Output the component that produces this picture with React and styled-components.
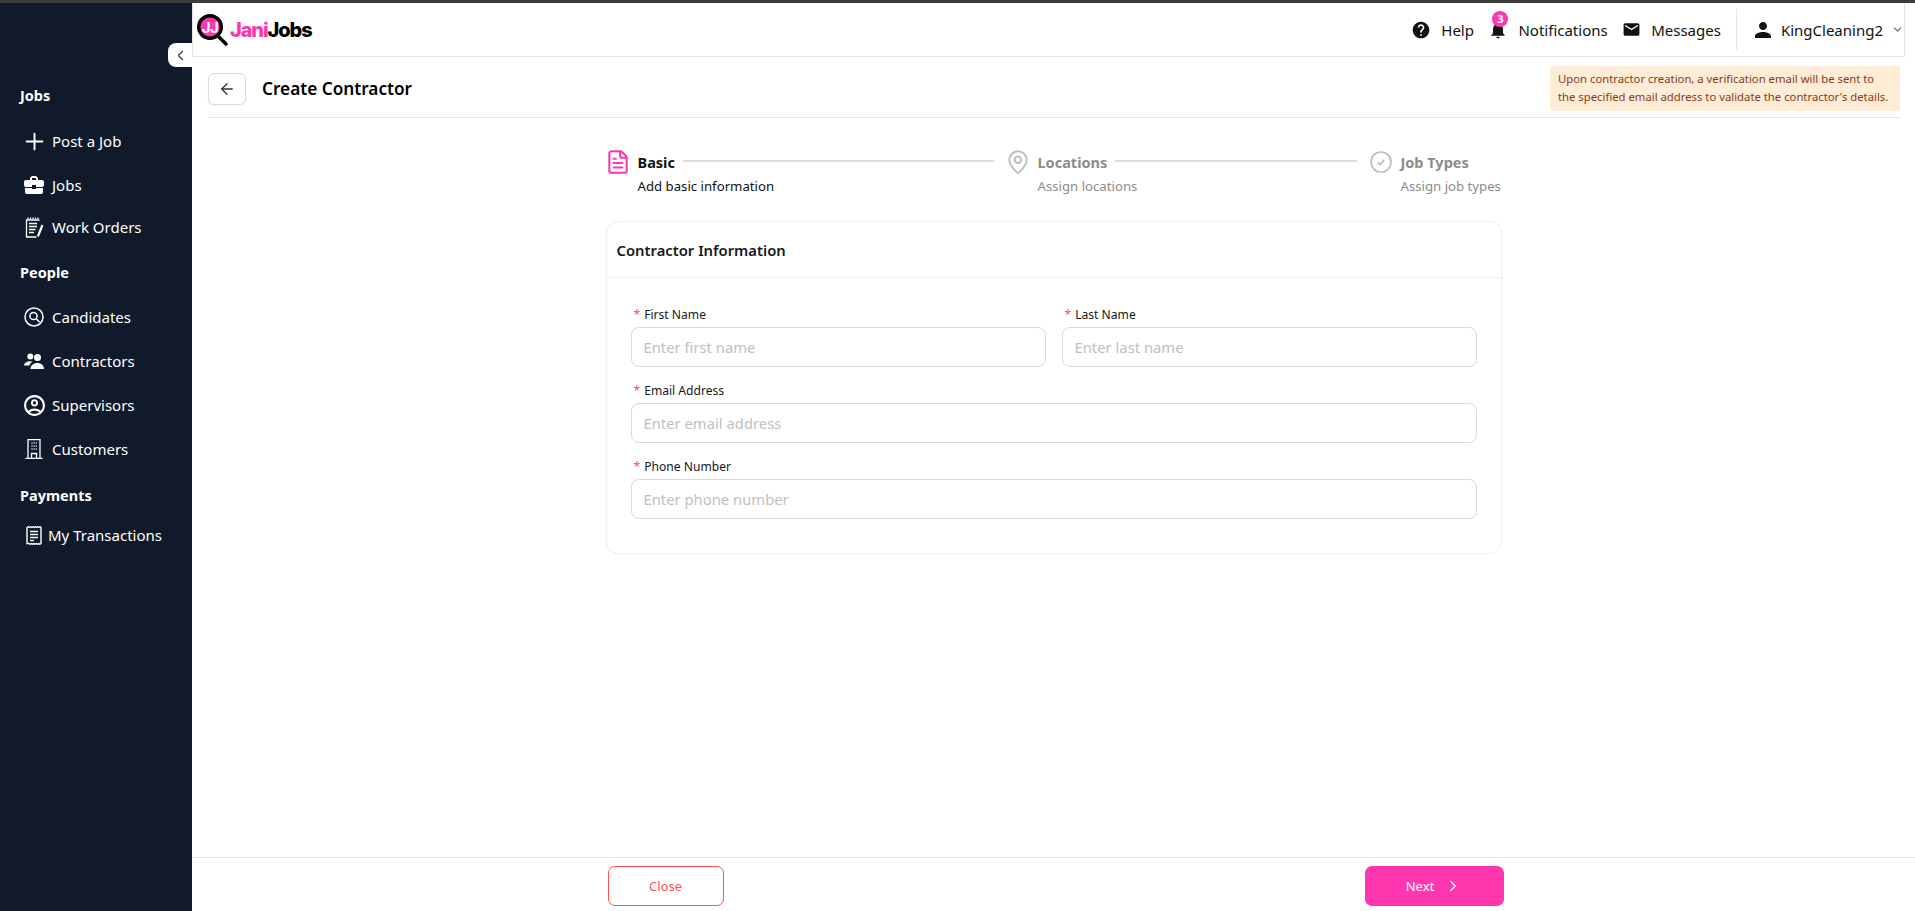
import React from 'react';
import styled, { createGlobalStyle } from 'styled-components';
import { Plus, ArrowLeft, ChevronLeft, ChevronDown, ChevronRight, FileText, MapPin } from 'lucide-react';
import {
  MdBusinessCenter,
  MdOutlineAccountCircle,
  MdHelp,
  MdNotifications,
  MdEmail,
  MdPerson,
} from 'react-icons/md';

const GlobalStyle = createGlobalStyle`
  html, body { margin: 0; padding: 0; height: 100%; background: #fff; }
  body { font-family: "Noto Sans", "Open Sans", sans-serif; color: #111; overflow: hidden; }
  #root { height: 100%; }
  * { box-sizing: border-box; }
  svg { flex-shrink: 0; }
`;

const Shell = styled.div`
  display: flex;
  height: 100vh;
  border-top: 3px solid #3b3b3b;
`;

const Sidebar = styled.aside`
  position: relative;
  width: 192px;
  flex-shrink: 0;
  background: #111a2a;
  color: #fff;
  padding-top: 81px;
`;

const CollapseButton = styled.button`
  position: absolute;
  top: 40px;
  right: 0;
  width: 24px;
  height: 24px;
  padding: 0;
  border: none;
  border-radius: 8px 0 0 8px;
  background: #fff;
  color: #333;
  display: flex;
  align-items: center;
  justify-content: center;
`;

const NavHeading = styled.div`
  height: 22px;
  line-height: 22px;
  padding-left: 20px;
  font-size: 14.5px;
  font-weight: 700;
  margin-top: ${(p) => p.$top || 0}px;
`;

const NavItem = styled.a`
  display: flex;
  align-items: center;
  height: 24px;
  padding-left: 24px;
  gap: ${(p) => (p.$tight ? 5 : 8)}px;
  font-size: 15px;
  color: #fff;
  margin-top: ${(p) => p.$top || 20}px;
`;

const NavIcon = styled.span`
  width: ${(p) => (p.$tight ? 19 : 20)}px;
  height: 24px;
  display: flex;
  align-items: center;
  justify-content: center;
  flex-shrink: 0;
`;

const Main = styled.div`
  flex: 1;
  min-width: 0;
  display: flex;
  flex-direction: column;
`;

const Header = styled.header`
  height: 54px;
  flex-shrink: 0;
  margin-right: 10px;
  padding: 0 0 0 3px;
  display: flex;
  align-items: center;
  justify-content: space-between;
  border: solid #e6e6e6;
  border-width: 0 1px 1px 1px;
`;

const Logo = styled.div`
  display: flex;
  align-items: center;
  height: 100%;
`;

const LogoWord = styled.span`
  font-family: "Inter", sans-serif;
  font-size: 20px;
  font-weight: 800;
  letter-spacing: -1.1px;
  line-height: 1;
  margin-top: 1px;
  color: ${(p) => p.$color};
`;

const HeaderNav = styled.nav`
  display: flex;
  align-items: center;
  height: 100%;
`;

const HeaderLink = styled.a`
  position: relative;
  display: flex;
  align-items: center;
  gap: ${(p) => p.$gap || 10}px;
  margin-left: 14.5px;
  font-size: 15px;
  color: #111;
`;

const Badge = styled.span`
  position: absolute;
  top: -9px;
  left: 4px;
  width: 16px;
  height: 16px;
  border-radius: 50%;
  background: #fe37ae;
  color: #fff;
  font-size: 11px;
  font-weight: 700;
  line-height: 16px;
  text-align: center;
`;

const HeaderDivider = styled.span`
  width: 1px;
  height: 41px;
  background: #e6e6e6;
  margin-left: 15px;
`;

const UserMenu = styled(HeaderLink)`
  margin-left: 14px;
`;

const UserChevron = styled(ChevronDown)`
  margin-left: 2px;
  color: #666;
`;

const TitleBar = styled.div`
  flex-shrink: 0;
  margin: 0 15px 0 16px;
  padding: 9px 0 6px;
  display: flex;
  align-items: center;
  justify-content: space-between;
  border-bottom: 1px solid #e6e6e6;
`;

const TitleGroup = styled.div`
  display: flex;
  align-items: center;
  gap: 16px;
`;

const BackButton = styled.button`
  width: 38px;
  height: 32px;
  padding: 0;
  display: flex;
  align-items: center;
  justify-content: center;
  background: #fff;
  border: 1px solid #dcdcdc;
  border-radius: 6px;
  box-shadow: 0 1px 2px rgba(0, 0, 0, 0.05);
  color: #333;
`;

const PageTitle = styled.h1`
  margin: 0;
  font-size: 17.2px;
  font-weight: 600;
  color: #000;
`;

const Notice = styled.div`
  width: 350px;
  height: 45px;
  padding: 4px 8px;
  background: #feecd6;
  border-radius: 4px;
  font-size: 11.3px;
  line-height: 18px;
  white-space: nowrap;
  color: #8a3a1a;
`;

const Content = styled.main`
  flex: 1;
  min-height: 0;
  display: flex;
  flex-direction: column;
  align-items: center;
`;

const Column = styled.div`
  width: 896px;
`;

const Stepper = styled.div`
  display: flex;
  margin-top: 33px;
  height: 70px;
`;

const Step = styled.div`
  display: flex;
  gap: 8px;
  flex-shrink: 0;
  width: ${(p) => (p.$width ? `${p.$width}px` : 'auto')};
  padding-right: 12px;
  color: ${(p) => (p.$active ? '#111' : '#8c8c8c')};
`;

const StepIcon = styled.span`
  width: 24px;
  height: 22px;
  display: flex;
  align-items: center;
  justify-content: center;
  flex-shrink: 0;
  color: ${(p) => (p.$active ? '#fe37ae' : '#bdbdbd')};
`;

const StepBody = styled.div`
  flex: 1;
  min-width: 0;
`;

const StepHead = styled.div`
  display: flex;
  align-items: center;
  height: 22px;
  gap: 8px;
`;

const StepTitle = styled.span`
  font-size: 14.5px;
  font-weight: 700;
`;

const StepLine = styled.span`
  flex: 1;
  height: 2px;
  margin-top: -2px;
  background: #dcdcdc;
`;

const StepSub = styled.div`
  margin-top: 3px;
  font-size: 13.2px;
  line-height: 20px;
`;

const Card = styled.section`
  border: 1px solid #eeeeee;
  border-radius: 12px;
`;

const CardHead = styled.h2`
  margin: 0;
  height: 56px;
  padding: 0 10px;
  display: flex;
  align-items: center;
  font-size: 14.8px;
  font-weight: 600;
  color: #16181d;
  border-bottom: 1px solid #eeeeee;
`;

const CardBody = styled.form`
  padding: 25px 24px 34px;
  display: flex;
  flex-direction: column;
  gap: 12px;
`;

const FieldRow = styled.div`
  display: flex;
  gap: 16px;
`;

const Field = styled.label`
  flex: 1;
  display: block;
`;

const FieldLabel = styled.span`
  display: flex;
  align-items: center;
  height: 22px;
  margin-bottom: 2px;
  padding-left: 3px;
  gap: 4px;
  font-size: 12.1px;
  color: #16181d;
`;

const Star = styled.i`
  font-style: normal;
  color: #ff4d4f;
`;

const TextInput = styled.input`
  display: block;
  width: 100%;
  height: 40px;
  padding: 0 12px;
  border: 1px solid #d9d9d9;
  border-radius: 8px;
  font: inherit;
  font-size: 14.8px;
  outline: none;
  &::placeholder { color: #bfbfbf; }
`;

const Footer = styled.footer`
  flex-shrink: 0;
  height: 54px;
  padding: 8px 0 0 4px;
  display: flex;
  justify-content: center;
  border-top: 1px solid #e6e6e6;
`;

const FooterRow = styled.div`
  width: 896px;
  display: flex;
  justify-content: space-between;
`;

const CloseButton = styled.button`
  width: 116px;
  height: 40px;
  border: 1px solid #ff5252;
  border-radius: 7px;
  background: #fff;
  color: #ff5252;
  font: inherit;
  font-size: 13px;
`;

const NextButton = styled.button`
  width: 139px;
  height: 40px;
  border: none;
  border-radius: 7px;
  background: #fe37ae;
  color: #fff;
  font: inherit;
  font-size: 13px;
  display: flex;
  align-items: center;
  justify-content: center;
  gap: 10px;
`;

const WorkOrdersIcon = () => (
  <svg width="20" height="22" viewBox="0 0 20 22" fill="none" stroke="currentColor" strokeWidth="1.3">
    <path d="M15.5 4H2.5v17h10" />
    <path d="M4 1.5v2M6.5 1.5v2M9 1.5v2M11.5 1.5v2M14 1.5v2" strokeDasharray="1.4 .6" />
    <path d="M5 7.5h8M5 10.5h8M5 13.5h6.5M5 16.5h5" strokeWidth="1.5" />
    <path d="M18.5 9l-4.6 11.4" strokeWidth="2.2" />
  </svg>
);

const CandidatesIcon = () => (
  <svg width="20" height="20" viewBox="0 0 20 20" fill="none" stroke="currentColor" strokeWidth="1.5">
    <circle cx="10" cy="10" r="9" />
    <circle cx="9.5" cy="9" r="3.6" />
    <path d="M12.2 11.7l3 3" strokeLinecap="round" />
  </svg>
);

const ContractorsIcon = () => (
  <svg width="20" height="16" viewBox="0 0 20 16" fill="currentColor">
    <circle cx="6.3" cy="3.6" r="3" />
    <circle cx="13.5" cy="4.4" r="3.5" />
    <path d="M0 12.6c.2-2.6 3-4.4 6-4.4 1 0 1.9.2 2.7.5-1.9.9-3.1 2.3-3.5 3.9z" />
    <path d="M6.4 16c0-3.6 3.2-6 7-6s6.6 2.4 6.6 6z" />
  </svg>
);

const CustomersIcon = () => (
  <svg width="18" height="20" viewBox="0 0 18 20" fill="none" stroke="currentColor" strokeWidth="1.3">
    <path d="M3 19.5V.7h12v18.8" />
    <path d="M.5 19.4h17" />
    <path d="M6.5 4h1M8.6 4h1M10.7 4h1M6.5 7h1M8.6 7h1M10.7 7h1M6.5 10h1M8.6 10h1M10.7 10h1" strokeWidth="1.5" />
    <path d="M6.5 19v-4.5h5V19" />
  </svg>
);

const ReceiptIcon = () => (
  <svg width="16" height="19" viewBox="0 0 16 19" fill="none" stroke="currentColor" strokeWidth="1.4">
    <path d="M1 1.5l1.2-.8 1.2.8 1.2-.8 1.2.8 1.2-.8 1.2.8 1.2-.8 1.2.8 1.2-.8 1.2.8 1.2-.8.8.8v16l-1.2.8-1.2-.8-1.2.8-1.2-.8-1.2.8-1.2-.8-1.2.8-1.2-.8-1.2.8-1.2-.8L1 17.5z" />
    <path d="M4 5.5h8M4 8.5h8M4 11.5h8M4 14.5h4" strokeWidth="1.5" />
  </svg>
);

const StepCheckIcon = () => (
  <svg width="22" height="22" viewBox="0 0 22 22" fill="none" stroke="currentColor">
    <circle cx="11" cy="11" r="10" strokeWidth="1.7" />
    <path d="M7.8 11.3l2.3 2.2 4.2-4.6" strokeWidth="1.7" />
  </svg>
);

const LogoMark = () => (
  <svg width="34" height="44" viewBox="0 0 34 44" fill="none">
    <circle cx="14" cy="19" r="11.3" fill="#fe37ae" stroke="#000" strokeWidth="3.4" />
    <path d="M23 29l7 7" stroke="#000" strokeWidth="3.4" strokeLinecap="round" />
    <text x="14" y="24.5" textAnchor="middle" fontFamily="Inter, sans-serif" fontWeight="700" fontSize="15" letterSpacing="-0.5" fill="#fff">JJ</text>
  </svg>
);

export default function App() {
  return (
    <Shell>
      <GlobalStyle />
      <Sidebar>
        <CollapseButton aria-label="Collapse"><ChevronLeft size={17} strokeWidth={1.5} /></CollapseButton>
        <NavHeading>Jobs</NavHeading>
        <NavItem $top={23}>
          <NavIcon><Plus size={27} strokeWidth={1.7} /></NavIcon>Post a Job
        </NavItem>
        <NavItem>
          <NavIcon><MdBusinessCenter size={24} /></NavIcon>Jobs
        </NavItem>
        <NavItem $top={18}>
          <NavIcon><WorkOrdersIcon /></NavIcon>Work Orders
        </NavItem>
        <NavHeading $top={22}>People</NavHeading>
        <NavItem $top={22}>
          <NavIcon><CandidatesIcon /></NavIcon>Candidates
        </NavItem>
        <NavItem>
          <NavIcon><ContractorsIcon /></NavIcon>Contractors
        </NavItem>
        <NavItem>
          <NavIcon><MdOutlineAccountCircle size={25} /></NavIcon>Supervisors
        </NavItem>
        <NavItem>
          <NavIcon><CustomersIcon /></NavIcon>Customers
        </NavItem>
        <NavHeading $top={23}>Payments</NavHeading>
        <NavItem $top={17} $tight>
          <NavIcon $tight><ReceiptIcon /></NavIcon>My Transactions
        </NavItem>
      </Sidebar>
      <Main>
        <Header>
          <Logo>
            <LogoMark />
            <LogoWord $color="#fe37ae">Jani</LogoWord>
            <LogoWord $color="#000">Jobs</LogoWord>
          </Logo>
          <HeaderNav>
            <HeaderLink><MdHelp size={20} />Help</HeaderLink>
            <HeaderLink $gap={10}>
              <MdNotifications size={20} />
              <Badge>3</Badge>
              Notifications
            </HeaderLink>
            <HeaderLink><MdEmail size={19} />Messages</HeaderLink>
            <HeaderDivider />
            <UserMenu $gap={6}>
              <MdPerson size={24} />KingCleaning2
              <UserChevron size={13} />
            </UserMenu>
          </HeaderNav>
        </Header>
        <TitleBar>
          <TitleGroup>
            <BackButton aria-label="Back"><ArrowLeft size={18} strokeWidth={1.7} /></BackButton>
            <PageTitle>Create Contractor</PageTitle>
          </TitleGroup>
          <Notice>
            Upon contractor creation, a verification email will be sent to<br />
            the specified email address to validate the contractor's details.
          </Notice>
        </TitleBar>
        <Content>
          <Column>
            <Stepper>
              <Step $width={400} $active>
                <StepIcon $active><FileText size={26} strokeWidth={1.9} /></StepIcon>
                <StepBody>
                  <StepHead><StepTitle>Basic</StepTitle><StepLine /></StepHead>
                  <StepSub>Add basic information</StepSub>
                </StepBody>
              </Step>
              <Step $width={363}>
                <StepIcon><MapPin size={26} strokeWidth={1.8} /></StepIcon>
                <StepBody>
                  <StepHead><StepTitle>Locations</StepTitle><StepLine /></StepHead>
                  <StepSub>Assign locations</StepSub>
                </StepBody>
              </Step>
              <Step>
                <StepIcon><StepCheckIcon /></StepIcon>
                <StepBody>
                  <StepHead><StepTitle>Job Types</StepTitle></StepHead>
                  <StepSub>Assign job types</StepSub>
                </StepBody>
              </Step>
            </Stepper>
            <Card>
              <CardHead>Contractor Information</CardHead>
              <CardBody>
                <FieldRow>
                  <Field>
                    <FieldLabel><Star>*</Star>First Name</FieldLabel>
                    <TextInput placeholder="Enter first name" />
                  </Field>
                  <Field>
                    <FieldLabel><Star>*</Star>Last Name</FieldLabel>
                    <TextInput placeholder="Enter last name" />
                  </Field>
                </FieldRow>
                <Field>
                  <FieldLabel><Star>*</Star>Email Address</FieldLabel>
                  <TextInput placeholder="Enter email address" />
                </Field>
                <Field>
                  <FieldLabel><Star>*</Star>Phone Number</FieldLabel>
                  <TextInput placeholder="Enter phone number" />
                </Field>
              </CardBody>
            </Card>
          </Column>
        </Content>
        <Footer>
          <FooterRow>
            <CloseButton>Close</CloseButton>
            <NextButton>Next <ChevronRight size={18} strokeWidth={1.6} /></NextButton>
          </FooterRow>
        </Footer>
      </Main>
    </Shell>
  );
}
